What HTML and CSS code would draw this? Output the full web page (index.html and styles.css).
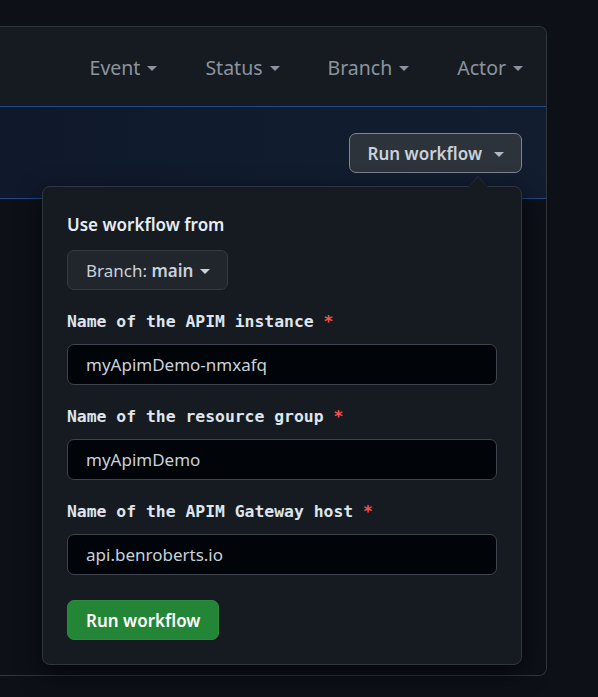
FILE: index.html
```html
<!DOCTYPE html>
<html lang="en">
<head>
<meta charset="utf-8">
<title>Run workflow</title>
<link rel="stylesheet" href="styles.css">
</head>
<body>
<div class="page">
  <div class="card">
    <div class="filters">
      <span class="filter">Event<span class="caret"></span></span>
      <span class="filter">Status<span class="caret"></span></span>
      <span class="filter">Branch<span class="caret"></span></span>
      <span class="filter">Actor<span class="caret"></span></span>
    </div>
    <div class="banner">
      <div class="dispatch">
        <button class="btn btn-run" type="button">Run workflow<span class="caret"></span></button>
        <div class="popover">
          <div class="pop-title">Use workflow from</div>
          <button class="btn btn-branch" type="button">Branch: <strong>main</strong><span class="caret"></span></button>
          <label class="field-label">Name of the APIM instance <span class="req">*</span></label>
          <input class="field-input" type="text" value="myApimDemo-nmxafq">
          <label class="field-label">Name of the resource group <span class="req">*</span></label>
          <input class="field-input" type="text" value="myApimDemo">
          <label class="field-label">Name of the APIM Gateway host <span class="req">*</span></label>
          <input class="field-input" type="text" value="api.benroberts.io">
          <button class="btn btn-primary" type="button">Run workflow</button>
        </div>
      </div>
    </div>
    <div class="card-body"></div>
  </div>
</div>
</body>
</html>
```
FILE: styles.css
```css
* { box-sizing: border-box; }
html, body {
  margin: 0;
  padding: 0;
  background: #0d1117;
  height: 697px;
  overflow: hidden;
}
body {
  font-family: "Noto Sans", "Open Sans", sans-serif;
  color: #c9d1d9;
}
.page {
  padding-top: 26px;
  width: 547px;
}
.card {
  border: 1px solid #30363d;
  border-left: none;
  border-radius: 0 8px 8px 0;
  background: #0d1117;
}
.filters {
  height: 79px;
  background: #161b22;
  border-radius: 0 8px 0 0;
  display: flex;
  justify-content: flex-end;
  align-items: center;
  gap: 48px;
  padding: 2px 23px 0 0;
  color: #8b949e;
  font-size: 19.5px;
}
.filter {
  display: inline-flex;
  align-items: center;
}
.caret {
  display: inline-block;
  width: 0;
  height: 0;
  border-left: 5px solid transparent;
  border-right: 5px solid transparent;
  border-top: 5px solid currentColor;
  margin-left: 7px;
  margin-top: 2px;
}
.banner {
  height: 93px;
  background: linear-gradient(90deg, #10192c 0%, #111c2f 60%, #121d30 100%);
  border-top: 1px solid #1f4a85;
  border-bottom: 1px solid #1f4a85;
  display: flex;
  justify-content: flex-end;
  align-items: center;
  padding: 1px 24px 0 0;
}
.dispatch {
  position: relative;
}
.btn {
  font-family: inherit;
  font-size: 17px;
  border-radius: 7px;
  display: inline-flex;
  align-items: center;
  height: 40px;
  cursor: pointer;
}
.btn-run {
  background: #2d333b;
  border: 1px solid #7d8590;
  color: #c9d1d9;
  font-weight: 600;
  padding: 0 17px 0 18px;
}
.btn-run .caret {
  margin-left: 12px;
  color: #adbac7;
}
.popover {
  position: absolute;
  top: calc(100% + 13px);
  right: 0;
  width: 480px;
  background: #161b22;
  border: 1px solid #30363d;
  border-radius: 8px;
  padding: 24px 24px 24px 24px;
  display: flex;
  flex-direction: column;
  align-items: flex-start;
  box-shadow: 0 8px 24px rgba(1, 4, 9, 0.75);
  z-index: 2;
}
.popover::before,
.popover::after {
  content: "";
  position: absolute;
  right: 33px;
  width: 0;
  height: 0;
  border-left: 10px solid transparent;
  border-right: 10px solid transparent;
}
.popover::before {
  top: -11px;
  border-bottom: 11px solid #30363d;
}
.popover::after {
  top: -10px;
  border-bottom: 10px solid #161b22;
}
.pop-title {
  font-size: 17px;
  font-weight: 600;
  line-height: 28px;
  color: #e6edf3;
}
.btn-branch {
  margin-top: 11px;
  background: #21262d;
  border: 1px solid #363b42;
  color: #c9d1d9;
  font-weight: 400;
  padding: 0 17px 0 18px;
  white-space: pre;
}
.btn-branch strong { font-weight: 600; }
.btn-branch .caret { margin-left: 7px; }
.field-label {
  margin-top: 20px;
  font-family: "DejaVu Sans Mono", "Liberation Mono", monospace;
  font-weight: 700;
  font-size: 16.4px;
  line-height: 24px;
  color: #dfe5eb;
}
.req {
  color: #f85149;
}
.field-input {
  margin-top: 10px;
  width: 100%;
  height: 41px;
  background: #010409;
  border: 1px solid #3d444d;
  border-radius: 7px;
  color: #c9d1d9;
  font-family: "Noto Sans", "Open Sans", sans-serif;
  font-size: 17px;
  padding: 0 18px;
  outline: none;
}
.btn-primary {
  margin-top: 25px;
  background: #238636;
  border: 1px solid #2b8a3e;
  color: #ffffff;
  font-weight: 600;
  padding: 0 18px;
}
.card-body {
  height: 476px;
  background: #0d1117;
  border-radius: 0 0 8px 0;
}
```
